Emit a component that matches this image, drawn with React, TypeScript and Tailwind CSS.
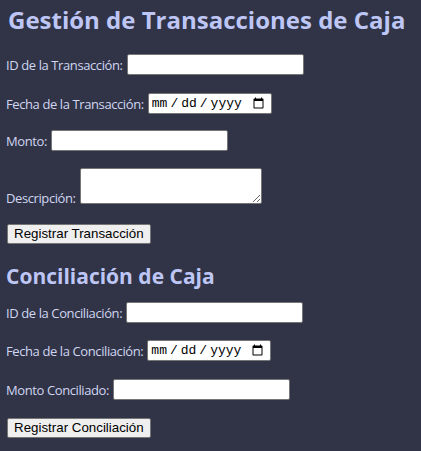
import React from "react";

const labelCls =
  "text-[13px] leading-[18px] tracking-[-0.4px] text-[#d0d6f2] whitespace-nowrap";
const inputCls =
  "h-[21px] w-[177px] border border-[#767676] bg-white rounded-[2px] px-[2px] text-[13px] text-black outline-none";
const dateCls =
  "h-[21px] w-[124px] border border-[#767676] bg-white rounded-[2px] pl-[2px] pr-[4px] text-[13px] text-black outline-none font-['Liberation_Mono',monospace] [&::-webkit-datetime-edit-text]:px-[2px]";
const btnCls =
  "h-[20px] border border-[#767676] bg-[#efefef] rounded-[2px] px-[6px] text-[13.33px] leading-[16px] text-black font-['Liberation_Sans',Arial,sans-serif]";

export default function App() {
  return (
    <div className="min-h-[451px] w-full bg-[#303446] pl-[6px] font-['Open_Sans',sans-serif] overflow-hidden">
      <div className="flex flex-col items-start">
        <h1 className="mt-[4px] h-[32px] pl-[2px] text-[24px] leading-[32px] font-bold text-[#bec6f5] whitespace-nowrap">
          Gestión de Transacciones de Caja
        </h1>
        <div className="mt-[18px] flex items-center gap-[4px]">
          <label className={labelCls}>ID de la Transacción:</label>
          <input type="text" className={inputCls} />
        </div>
        <div className="mt-[18px] flex items-center gap-[4px]">
          <label className={labelCls}>Fecha de la Transacción:</label>
          <input type="date" className={dateCls} />
        </div>
        <div className="mt-[16px] flex items-center gap-[4px]">
          <label className={labelCls}>Monto:</label>
          <input type="text" className={inputCls} />
        </div>
        <div className="mt-[17px] flex items-end gap-[4px]">
          <label className={labelCls + " mb-[-3px]"}>Descripción:</label>
          <textarea className="h-[36px] w-[182px] border border-[#767676] bg-white rounded-[2px] text-[13px] text-black outline-none block" />
        </div>
        <button className={"mt-[20px] ml-[1px] " + btnCls}>Registrar Transacción</button>
        <h2 className="mt-[18px] h-[28px] text-[21px] leading-[28px] font-bold text-[#bec6f5] whitespace-nowrap">
          Conciliación de Caja
        </h2>
        <div className="mt-[12px] flex items-center gap-[4px]">
          <label className={labelCls}>ID de la Conciliación:</label>
          <input type="text" className={inputCls} />
        </div>
        <div className="mt-[17px] flex items-center gap-[4px]">
          <label className={labelCls}>Fecha de la Conciliación:</label>
          <input type="date" className={dateCls} />
        </div>
        <div className="mt-[18px] flex items-center gap-[4px]">
          <label className={labelCls}>Monto Conciliado:</label>
          <input type="text" className={inputCls} />
        </div>
        <button className={"mt-[18px] ml-[1px] " + btnCls}>Registrar Conciliación</button>
      </div>
    </div>
  );
}
